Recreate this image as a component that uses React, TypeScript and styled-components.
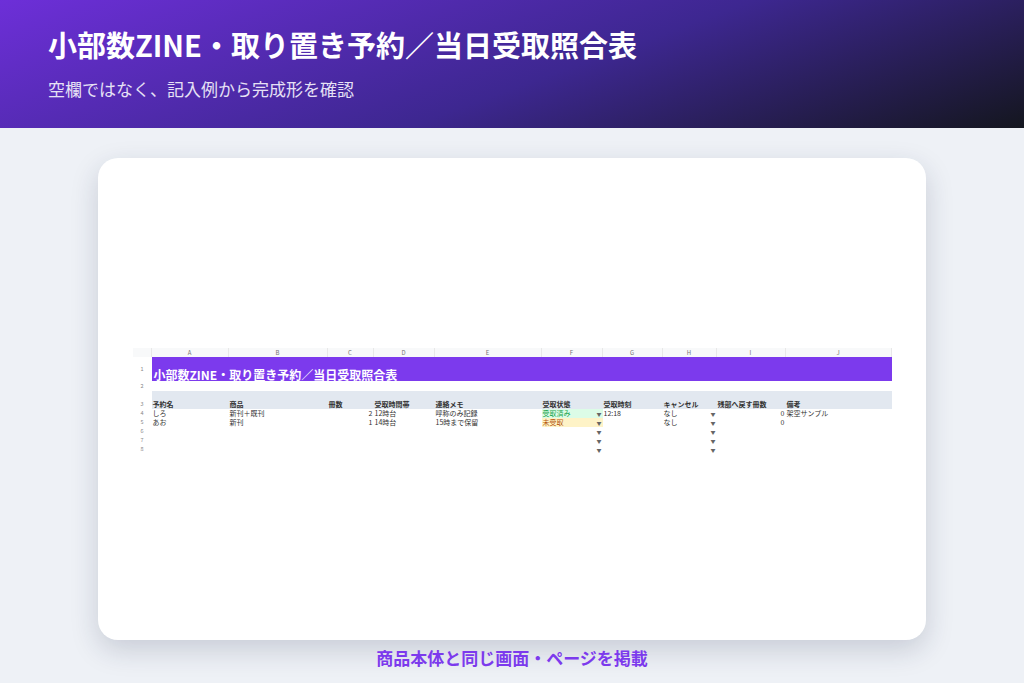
import React from "react";
import styled, { createGlobalStyle } from "styled-components";

const G = createGlobalStyle`
  body{margin:0;font-family:"Noto Sans CJK JP","Noto Sans",sans-serif;background:#eef1f6;}
`;
const Page = styled.div`width:1024px;height:683px;display:flex;flex-direction:column;overflow:hidden;`;
const Header = styled.header`
  height:128px;box-sizing:border-box;padding:23px 48px 0;
  background:linear-gradient(160deg,#6d2fd8 0%,#3d2790 55%,#14161f 100%);color:#fff;
`;
const Title = styled.h1`margin:0;font-size:29px;font-weight:700;line-height:42px;`;
const Sub = styled.p`margin:13px 0 0;font-size:17px;line-height:22px;color:#e6e1f5;`;
const Body = styled.main`flex:1;display:flex;flex-direction:column;align-items:center;padding-top:30px;`;
const Card = styled.section`
  width:828px;height:482px;background:#fff;border-radius:20px;
  box-shadow:0 10px 28px rgba(30,40,70,.18);display:flex;align-items:center;justify-content:center;
`;
const Caption = styled.div`margin-top:8px;color:#7c3aed;font-weight:700;font-size:17px;line-height:20px;`;

const cols = [19, 77, 99, 46, 61, 107, 61, 60, 54, 69, 106];
const Sheet = styled.div`
  display:grid;grid-template-columns:${cols.map(c => c + "px").join(" ")};
  grid-template-rows:9px 24px 10px 18px repeat(5,9px);
  font-size:7px;line-height:9px;color:#333;margin-top:4px;
`;
const Cell = styled.div<{ $bg?: string; $c?: string; $right?: boolean; $bold?: boolean; $end?: boolean }>`
  background:${p => p.$bg || "transparent"};color:${p => p.$c || "#333"};
  font-weight:${p => (p.$bold ? 700 : 400)};
  white-space:nowrap;overflow:hidden;padding:0 1px;display:flex;
  align-items:${p => (p.$end ? "flex-end" : "center")};
  justify-content:${p => (p.$right ? "flex-end" : "flex-start")};
`;
const ColHead = styled(Cell)`background:#f8f9fa;color:#777;font-size:6px;justify-content:center;border-right:1px solid #e8e8e8;`;
const RowNum = styled(Cell)`color:#888;font-size:5.5px;justify-content:center;`;
const Banner = styled.div`grid-column:2 / 12;background:#7c3aed;color:#fff;font-weight:700;font-size:12px;display:flex;align-items:flex-end;padding:0 2px 2px;`;
const Arrow = styled.span`margin-left:auto;font-size:5px;color:#666;`;

const data: string[][] = [
  ["しろ", "新刊＋既刊", "2", "12時台", "呼称のみ記録", "受取済み", "12:18", "なし", "0", "架空サンプル"],
  ["あお", "新刊", "1", "14時台", "15時まで保留", "未受取", "", "なし", "0", ""],
  ["", "", "", "", "", "", "", "", "", ""],
  ["", "", "", "", "", "", "", "", "", ""],
  ["", "", "", "", "", "", "", "", "", ""],
];
const heads = ["予約名", "商品", "冊数", "受取時間帯", "連絡メモ", "受取状態", "受取時刻", "キャンセル", "残部へ戻す冊数", "備考"];

export default function App() {
  return (
    <Page>
      <G />
      <Header>
        <Title>小部数ZINE・取り置き予約／当日受取照合表</Title>
        <Sub>空欄ではなく、記入例から完成形を確認</Sub>
      </Header>
      <Body>
        <Card>
          <Sheet>
            <ColHead />
            {"ABCDEFGHIJ".split("").map(l => <ColHead key={l}>{l}</ColHead>)}
            <RowNum>1</RowNum>
            <Banner>小部数ZINE・取り置き予約／当日受取照合表</Banner>
            <RowNum>2</RowNum>
            {Array.from({ length: 10 }).map((_, i) => <Cell key={i} />)}
            <RowNum $end>3</RowNum>
            {heads.map((h, i) => (
              <Cell key={h} $bg="#e2e8f0" $bold $end>{i === 3 || i === 9 ? <span style={{ paddingLeft: i === 3 ? 0 : 0 }}>{h}</span> : h}</Cell>
            ))}
            {data.map((r, ri) => (
              <React.Fragment key={ri}>
                <RowNum>{ri + 4}</RowNum>
                {r.map((v, ci) => {
                  if (ci === 5) {
                    const bg = v === "受取済み" ? "#dcfce7" : v === "未受取" ? "#fef3c7" : undefined;
                    const c = v === "受取済み" ? "#16a34a" : v === "未受取" ? "#b45309" : undefined;
                    return <Cell key={ci} $bg={bg} $c={c}>{v}<Arrow>▼</Arrow></Cell>;
                  }
                  if (ci === 7) return <Cell key={ci}>{v}<Arrow>▼</Arrow></Cell>;
                  if (ci === 2 || ci === 8) return <Cell key={ci} $right>{v}</Cell>;
                  return <Cell key={ci}>{v}</Cell>;
                })}
              </React.Fragment>
            ))}
          </Sheet>
        </Card>
        <Caption>商品本体と同じ画面・ページを掲載</Caption>
      </Body>
    </Page>
  );
}
